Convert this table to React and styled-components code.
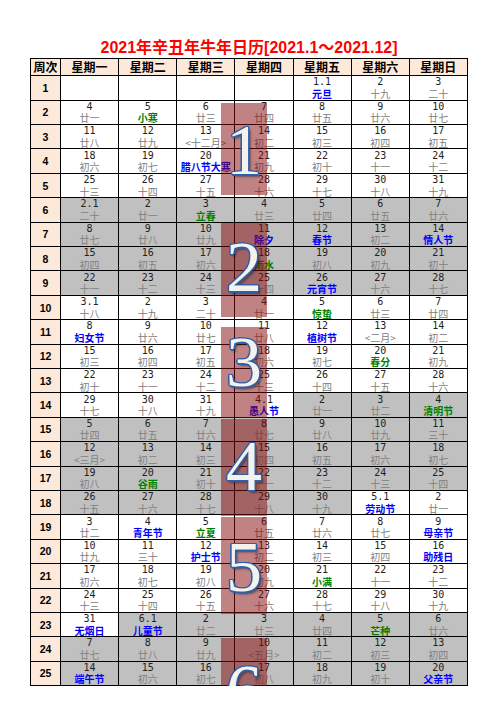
import React from "react";
import styled, { createGlobalStyle } from "styled-components";

const GlobalStyle = createGlobalStyle`
  html, body {
    margin: 0;
    padding: 0;
    overflow: hidden;
    background: #fff;
  }
  body {
    font-family: "Noto Sans CJK SC", sans-serif;
  }
`;

const Page = styled.div`
  width: 438px;
  margin-left: 30px;
  padding-top: 37px;
`;

const Title = styled.h1`
  margin: 0;
  height: 21px;
  line-height: 21px;
  text-align: center;
  font-family: "Liberation Sans", "Noto Sans CJK SC", sans-serif;
  font-size: 16px;
  font-weight: bold;
  color: #ff0000;
  white-space: nowrap;
`;

const Sheet = styled.div`
  position: relative;
  display: grid;
  grid-template-columns: 30px repeat(7, 58.14px);
  grid-template-rows: 17.3px repeat(25, 24.4px);
  border-left: 1px solid #000;
  border-top: 1px solid #000;
`;

const Cell = styled.div`
  box-sizing: border-box;
  border-right: 1px solid #000;
  border-bottom: 1px solid #000;
  background: ${(p) => (p.$shade ? "#c0c0c0" : "#fff")};
  display: flex;
  flex-direction: column;
  align-items: center;
  justify-content: center;
  white-space: nowrap;
`;

const HeadCell = styled(Cell)`
  background: #fde9d9;
  font-size: 12px;
  font-weight: bold;
  color: #000;
  line-height: 1;
`;

const WeekCell = styled(Cell)`
  background: #fde9d9;
  font-family: "Liberation Sans", sans-serif;
  font-size: 10.5px;
  font-weight: bold;
  color: #000;
`;

const Num = styled.span`
  font-family: "DejaVu Sans Mono", monospace;
  font-size: 10px;
  line-height: 11.5px;
  color: #222;
`;

const colors = { b: "#0000ff", g: "#008000" };

const Lunar = styled.span`
  font-size: 10px;
  line-height: 11.5px;
  color: ${(p) => (p.$kind ? colors[p.$kind] : "#808080")};
  font-weight: ${(p) => (p.$kind ? "bold" : "normal")};
`;

const Band = styled.div`
  position: absolute;
  left: 190px;
  width: 46px;
  background: rgba(130, 5, 5, 0.5);
  pointer-events: none;
`;

const blue = "#2f5fa8";

const Digit = styled.span`
  position: absolute;
  left: 190px;
  width: 46px;
  height: 72px;
  text-align: center;
  font-family: "Liberation Serif", serif;
  font-size: 72px;
  line-height: 72px;
  color: #f3f2ec;
  pointer-events: none;
  text-shadow: -1.5px 0 0 ${blue}, 1.5px 0 0 ${blue}, 0 -1.5px 0 ${blue},
    0 1.5px 0 ${blue}, -1px -1px 0 ${blue}, 1px -1px 0 ${blue},
    -1px 1px 0 ${blue}, 1px 1px 0 ${blue}, 2.5px 2.5px 2px rgba(20, 30, 60, 0.5);
`;

const heads = ["周次", "星期一", "星期二", "星期三", "星期四", "星期五", "星期六", "星期日"];

const weeks = [
  ["0000000", "", "", "", "", "1.1/元旦/b", "2/十九", "3/二十"],
  ["0000000", "4/廿一", "5/小寒/g", "6/廿三", "7/廿四", "8/廿五", "9/廿六", "10/廿七"],
  ["0000000", "11/廿八", "12/廿九", "13/<十二月>", "14/初二", "15/初三", "16/初四", "17/初五"],
  ["0000000", "18/初六", "19/初七", "20/腊八节大寒/b", "21/初九", "22/初十", "23/十一", "24/十二"],
  ["0000000", "25/十三", "26/十四", "27/十五", "28/十六", "29/十七", "30/十八", "31/十九"],
  ["1111111", "2.1/二十", "2/廿一", "3/立春/g", "4/廿三", "5/廿四", "6/廿五", "7/廿六"],
  ["1111111", "8/廿七", "9/廿八", "10/廿九", "11/除夕/b", "12/春节/b", "13/初二", "14/情人节/b"],
  ["1111111", "15/初四", "16/初五", "17/初六", "18/雨水/g", "19/初八", "20/初九", "21/初十"],
  ["1111111", "22/十一", "23/十二", "24/十三", "25/十四", "26/元宵节/b", "27/十六", "28/十七"],
  ["0000000", "3.1/十八", "2/十九", "3/二十", "4/廿一", "5/惊蛰/g", "6/廿三", "7/廿四"],
  ["0000000", "8/妇女节/b", "9/廿六", "10/廿七", "11/廿八", "12/植树节/b", "13/<二月>", "14/初二"],
  ["0000000", "15/初三", "16/初四", "17/初五", "18/初六", "19/初七", "20/春分/g", "21/初九"],
  ["0000000", "22/初十", "23/十一", "24/十二", "25/十三", "26/十四", "27/十五", "28/十六"],
  ["0000111", "29/十七", "30/十八", "31/十九", "4.1/愚人节/b", "2/廿一", "3/廿二", "4/清明节/g"],
  ["1111111", "5/廿四", "6/廿五", "7/廿六", "8/廿七", "9/廿八", "10/廿九", "11/三十"],
  ["1111111", "12/<三月>", "13/初二", "14/初三", "15/初四", "16/初五", "17/初六", "18/初七"],
  ["1111111", "19/初八", "20/谷雨/g", "21/初十", "22/十一", "23/十二", "24/十三", "25/十四"],
  ["1111100", "26/十五", "27/十六", "28/十七", "29/十八", "30/十九", "5.1/劳动节/b", "2/廿一"],
  ["0000000", "3/廿二", "4/青年节/b", "5/立夏/g", "6/廿五", "7/廿六", "8/廿七", "9/母亲节/b"],
  ["0000000", "10/廿九", "11/三十", "12/护士节/b", "13/初二", "14/初三", "15/初四", "16/助残日/b"],
  ["0000000", "17/初六", "18/初七", "19/初八", "20/初九", "21/小满/g", "22/十一", "23/十二"],
  ["0000000", "24/十三", "25/十四", "26/十五", "27/十六", "28/十七", "29/十八", "30/十九"],
  ["0111111", "31/无烟日/b", "6.1/儿童节/b", "2/廿二", "3/廿三", "4/廿四", "5/芒种/g", "6/廿六"],
  ["1111111", "7/廿七", "8/廿八", "9/廿九", "10/<五月>", "11/初二", "12/初三", "13/初四"],
  ["1111111", "14/端午节/b", "15/初六", "16/初七", "17/初八", "18/初九", "19/初十", "20/父亲节/b"],
];

// month bands over the Thursday column (page y - 59)
const bands = [
  { n: "1", top: 44, h: 92, mid: 91 },
  { n: "2", top: 164, h: 94, mid: 208 },
  { n: "3", top: 268, h: 91, mid: 303 },
  { n: "4", top: 360, h: 97, mid: 407 },
  { n: "5", top: 458, h: 97, mid: 508 },
  { n: "6", top: 579, h: 48.3, mid: 631 },
];

function Day({ value, shade }) {
  if (!value) return <Cell $shade={shade} />;
  const [num, text, kind] = value.split("/");
  return (
    <Cell $shade={shade}>
      <Num>{num}</Num>
      <Lunar $kind={kind}>{text}</Lunar>
    </Cell>
  );
}

export default function App() {
  return (
    <>
      <GlobalStyle />
      <Page>
        <Title>2021年辛丑年牛年日历[2021.1～2021.12]</Title>
        <Sheet>
          {heads.map((h) => (
            <HeadCell key={h}>{h}</HeadCell>
          ))}
          {weeks.map(([shade, ...days], i) => (
            <React.Fragment key={i}>
              <WeekCell>{i + 1}</WeekCell>
              {days.map((d, j) => (
                <Day key={j} value={d} shade={shade[j] === "1"} />
              ))}
            </React.Fragment>
          ))}
          {bands.map((b) => (
            <Band key={"b" + b.n} style={{ top: b.top, height: b.h }} />
          ))}
          {bands.map((b) => (
            <Digit key={"d" + b.n} style={{ top: b.mid - 36 }}>
              {b.n}
            </Digit>
          ))}
        </Sheet>
      </Page>
    </>
  );
}
